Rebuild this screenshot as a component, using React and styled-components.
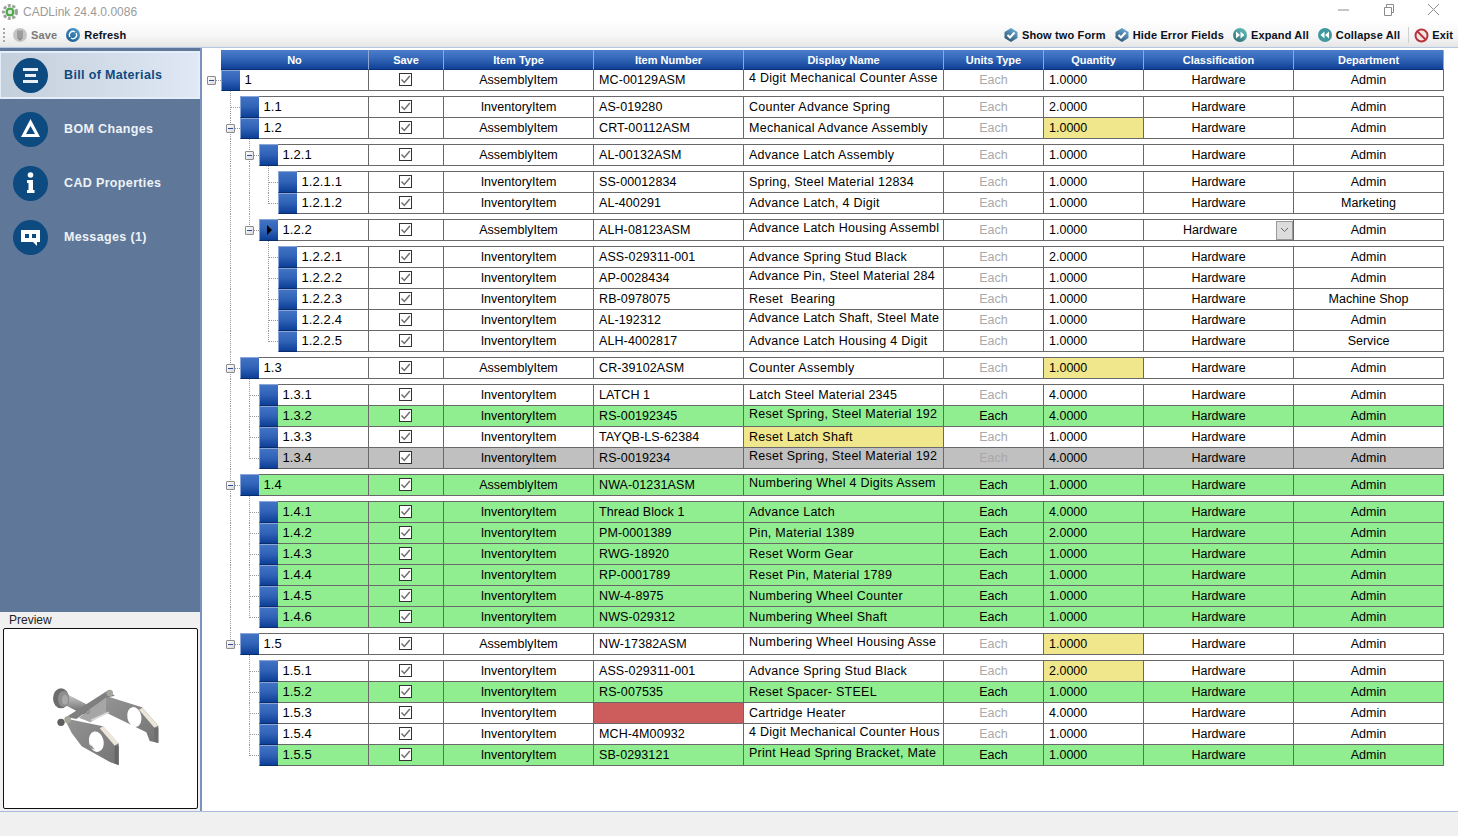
import React from 'react';
import styled, { createGlobalStyle } from 'styled-components';

const GlobalStyle = createGlobalStyle`
  html, body {
    margin: 0;
    padding: 0;
    height: 100%;
    background: #f0f0f0;
    overflow: hidden;
  }
  #root {
    height: 100%;
  }
  * {
    box-sizing: border-box;
  }
`;

const GREEN = '#90ee90';
const GRAY = '#c0c0c0';
const YELLOW = '#f0e68c';
const RED = '#cd5c5c';

// no, type, number, name, qty, opts
const r = (no, type, number, name, qty = '1.0000', opts = {}) => ({ no, type, number, name, qty, ...opts });
const A = 'AssemblyItem';
const I = 'InventoryItem';

const rows = [
  r('1', A, 'MC-00129ASM', '4 Digit Mechanical Counter Asse', '1.0000', { raised: true }),
  r('1.1', I, 'AS-019280', 'Counter Advance Spring', '2.0000'),
  r('1.2', A, 'CRT-00112ASM', 'Mechanical Advance Assembly', '1.0000', { qtyFill: YELLOW }),
  r('1.2.1', A, 'AL-00132ASM', 'Advance Latch Assembly'),
  r('1.2.1.1', I, 'SS-00012834', 'Spring, Steel Material 12834'),
  r('1.2.1.2', I, 'AL-400291', 'Advance Latch, 4 Digit', '1.0000', { dept: 'Marketing' }),
  r('1.2.2', A, 'ALH-08123ASM', 'Advance Latch Housing Assembl', '1.0000', { raised: true, current: true }),
  r('1.2.2.1', I, 'ASS-029311-001', 'Advance Spring Stud Black', '2.0000'),
  r('1.2.2.2', I, 'AP-0028434', 'Advance Pin, Steel Material 284', '1.0000', { raised: true }),
  r('1.2.2.3', I, 'RB-0978075', 'Reset  Bearing', '1.0000', { dept: 'Machine Shop' }),
  r('1.2.2.4', I, 'AL-192312', 'Advance Latch Shaft, Steel Mate', '1.0000', { raised: true }),
  r('1.2.2.5', I, 'ALH-4002817', 'Advance Latch Housing 4 Digit', '1.0000', { dept: 'Service' }),
  r('1.3', A, 'CR-39102ASM', 'Counter Assembly', '1.0000', { qtyFill: YELLOW }),
  r('1.3.1', I, 'LATCH 1', 'Latch Steel Material 2345', '4.0000'),
  r('1.3.2', I, 'RS-00192345', 'Reset Spring, Steel Material 192', '4.0000', { fill: GREEN, raised: true }),
  r('1.3.3', I, 'TAYQB-LS-62384', 'Reset Latch Shaft', '1.0000', { nameFill: YELLOW }),
  r('1.3.4', I, 'RS-0019234', 'Reset Spring, Steel Material 192', '4.0000', { fill: GRAY, raised: true }),
  r('1.4', A, 'NWA-01231ASM', 'Numbering Whel 4 Digits Assem', '1.0000', { fill: GREEN, raised: true }),
  r('1.4.1', I, 'Thread Block 1', 'Advance Latch', '4.0000', { fill: GREEN }),
  r('1.4.2', I, 'PM-0001389', 'Pin, Material 1389', '2.0000', { fill: GREEN }),
  r('1.4.3', I, 'RWG-18920', 'Reset Worm Gear', '1.0000', { fill: GREEN }),
  r('1.4.4', I, 'RP-0001789', 'Reset Pin, Material 1789', '1.0000', { fill: GREEN }),
  r('1.4.5', I, 'NW-4-8975', 'Numbering Wheel Counter', '1.0000', { fill: GREEN }),
  r('1.4.6', I, 'NWS-029312', 'Numbering Wheel Shaft', '1.0000', { fill: GREEN }),
  r('1.5', A, 'NW-17382ASM', 'Numbering Wheel Housing Asse', '1.0000', { qtyFill: YELLOW, raised: true }),
  r('1.5.1', I, 'ASS-029311-001', 'Advance Spring Stud Black', '2.0000', { qtyFill: YELLOW }),
  r('1.5.2', I, 'RS-007535', 'Reset Spacer- STEEL', '1.0000', { fill: GREEN }),
  r('1.5.3', I, '', 'Cartridge Heater', '4.0000', { numberFill: RED }),
  r('1.5.4', I, 'MCH-4M00932', '4 Digit Mechanical Counter Hous', '1.0000', { raised: true }),
  r('1.5.5', I, 'SB-0293121', 'Print Head Spring Bracket, Mate', '1.0000', { fill: GREEN, raised: true }),
];

const levelOf = (row) => row.no.split('.').length - 1;
const parentOf = (no) => no.split('.').slice(0, -1).join('.');

// works out which dotted guide goes in which gutter column
const hasLaterSibling = (index, no) => {
  const parent = parentOf(no);
  const level = no.split('.').length;
  return rows.slice(index + 1).some((x) => x.no.split('.').length === level && parentOf(x.no) === parent);
};

const guidesFor = (row, index) => {
  const level = levelOf(row);
  const parts = row.no.split('.');
  const guides = [];
  for (let col = 0; col <= level; col++) {
    if (col === 0) {
      guides.push(level === 0 ? 'root' : 'none');
    } else if (col === level) {
      guides.push(hasLaterSibling(index, row.no) ? 'tee' : 'last');
    } else {
      const ancestor = parts.slice(0, col + 1).join('.');
      guides.push(hasLaterSibling(index, ancestor) ? 'pass' : 'none');
    }
  }
  return guides;
};

const isParent = (row) => rows.some((x) => parentOf(x.no) === row.no);

const columns = [
  { title: 'Save', width: 75 },
  { title: 'Item Type', width: 150 },
  { title: 'Item Number', width: 150 },
  { title: 'Display Name', width: 200 },
  { title: 'Units Type', width: 100 },
  { title: 'Quantity', width: 100 },
  { title: 'Classification', width: 150 },
  { title: 'Department', width: 150 },
];

const CircleIcon = ({ kind }) => (
  <svg width="35" height="35" viewBox="0 0 35 35">
    <circle cx="17.5" cy="17.5" r="17.5" fill="#0c4a80" />
    {kind === 'list' && (
      <g fill="#e9eff6">
        <rect x="10" y="10" width="15" height="3" />
        <rect x="12" y="16" width="11" height="3" />
        <rect x="10" y="22" width="15" height="3" />
      </g>
    )}
    {kind === 'delta' && <path d="M17.5 7 L8 25 H27 Z M17.5 14 L22 22 H13 Z" fill="#fff" fillRule="evenodd" />}
    {kind === 'info' && (
      <g fill="#fff">
        <circle cx="17.5" cy="9" r="2.8" />
        <path d="M14 14 H20 V24 H21.5 V27 H14 V24 H15.5 V17 H14 Z" />
      </g>
    )}
    {kind === 'chat' && (
      <g>
        <path d="M8 10 H27 V22 H24 V26 L20 22 H8 Z" fill="#fff" />
        <rect x="12" y="14" width="4" height="4" fill="#0c4a80" />
        <rect x="19" y="14" width="4" height="4" fill="#0c4a80" />
      </g>
    )}
  </svg>
);

const BallIcon = ({ kind }) => {
  const fills = {
    check: ['#6cb2dc', '#2c4f6c'],
    refresh: ['#4a9bd0', '#1d5c8e'],
    expand: ['#62c0b8', '#2f6d78'],
  };
  const [a, b] = fills[kind] || fills.check;
  const id = `ball-${kind}`;
  return (
    <svg width="16" height="16" viewBox="0 0 16 16">
      <defs>
        <linearGradient id={id} x1="0.8" y1="0" x2="0.2" y2="1">
          <stop offset="0" stopColor={a} />
          <stop offset="1" stopColor={b} />
        </linearGradient>
      </defs>
      <path d={kind === 'check' ? 'M8 1 L14.5 5 V11 L8 15 L1.5 11 V5 Z' : 'M8 1 A7 7 0 1 0 8 15 A7 7 0 1 0 8 1 Z'} fill={`url(#${id})`} />
      {kind === 'check' && <path d="M4.5 8 L7 10.5 L11.5 5.5" stroke="#fff" strokeWidth="2" fill="none" />}
      {kind === 'expand' && <path d="M4 4.5 L8 8 L4 11.5 Z M8.5 4.5 L12.5 8 L8.5 11.5 Z" fill="#fff" />}
      {kind === 'refresh' && <path d="M5 10 A3.6 3.6 0 0 1 10 5 M11 6 A3.6 3.6 0 0 1 6 11" stroke="#fff" strokeWidth="1.3" fill="none" />}
    </svg>
  );
};

const CollapseIcon = () => (
  <svg width="16" height="16" viewBox="0 0 16 16">
    <circle cx="8" cy="8" r="7" fill="#3e9aa0" />
    <path d="M12 4.5 L8 8 L12 11.5 Z M7.5 4.5 L3.5 8 L7.5 11.5 Z" fill="#fff" />
  </svg>
);

const SaveIcon = () => (
  <svg width="16" height="16" viewBox="0 0 16 16">
    <circle cx="8" cy="8" r="7" fill="#c4c4c4" />
    <rect x="5" y="3.5" width="6" height="8" fill="#9d9d9d" />
    <path d="M8 14 L5.5 11 H10.5 Z" fill="#8a8a8a" />
  </svg>
);

const ExitIcon = () => (
  <svg width="15" height="15" viewBox="0 0 15 15">
    <circle cx="7.5" cy="7.5" r="6" fill="#f2e6e6" stroke="#b8353c" strokeWidth="2" />
    <path d="M3.5 3.5 L11.5 11.5" stroke="#b8353c" strokeWidth="2" />
  </svg>
);

const AppGear = () => (
  <svg width="18" height="18" viewBox="0 0 18 18">
    <circle cx="9" cy="9" r="6.5" fill="none" stroke="#9aa39a" strokeWidth="3" strokeDasharray="3 1.6" />
    <circle cx="9" cy="9" r="4.5" fill="#4fa84a" />
    <circle cx="9" cy="9" r="2.2" fill="#dfe8df" />
  </svg>
);

const CheckMark = () => (
  <svg width="11" height="11" viewBox="0 0 11 11">
    <path d="M1.5 5.5 L4.3 8.4 L9.8 2" stroke="#6e6e6e" strokeWidth="1.5" fill="none" />
  </svg>
);

// traced by eye from the preview thumbnail
const PartDrawing = () => (
  <svg width="115" height="90" viewBox="0 0 345 270">
    <defs>
      <linearGradient id="pin" x1="0" y1="0" x2="0" y2="1">
        <stop offset="0" stopColor="#d0d0d0" />
        <stop offset="1" stopColor="#585858" />
      </linearGradient>
      <linearGradient id="plate" x1="0" y1="0" x2="1" y2="1">
        <stop offset="0" stopColor="#949494" />
        <stop offset="1" stopColor="#747474" />
      </linearGradient>
    </defs>
    <path d="M58 44 L130 82 L120 112 L54 78 Z" fill="url(#pin)" />
    <ellipse cx="42" cy="58" rx="24" ry="30" fill="#6c6c6c" />
    <ellipse cx="50" cy="60" rx="17" ry="24" fill="#8e8e8e" />
    <ellipse cx="54" cy="62" rx="9" ry="15" fill="#a8a8a8" />

    <path d="M175 50 L285 85 L334 140 V192 L308 186 L298 160 L175 100 Z" fill="url(#plate)" />
    <ellipse cx="262" cy="114" rx="21" ry="30" fill="#fff" transform="rotate(-12 262 114)" />
    <path d="M286 86 L334 140 L322 146 L276 92 Z" fill="#ece6d8" />
    <path d="M322 146 H334 V192 L322 188 Z" fill="#6e6e6e" />

    <path d="M176 52 L176 102 L130 130 L96 116 Z" fill="#a6a6a6" />
    <ellipse cx="122" cy="97" rx="5" ry="7" fill="none" stroke="#6b6b6b" strokeWidth="2" />
    <path d="M180 36 L204 50 L176 56 L88 120 L58 114 Z" fill="#7f7f7f" />
    <circle cx="188" cy="42" r="10" fill="#a5a59c" />
    <path d="M132 124 L186 100" stroke="#d8d8d8" strokeWidth="5" />

    <path d="M52 118 L168 142 L215 194 V258 L190 250 L104 202 L74 162 Z" fill="url(#plate)" />
    <ellipse cx="148" cy="188" rx="22" ry="31" fill="#fff" transform="rotate(-12 148 188)" />
    <path d="M130 196 L144 212 L130 206 Z" fill="#8a8a8a" />
    <path d="M168 142 L215 192 L203 200 L158 148 Z" fill="#ece6d8" />
    <path d="M203 200 H215 V258 L203 254 Z" fill="#666" />
    <circle cx="42" cy="130" r="11" fill="#5e5e5e" />
    <circle cx="62" cy="122" r="10" fill="#a6a69c" />
  </svg>
);

const App = () => {
  const sideItems = [
    { label: 'Bill of Materials', icon: 'list', active: true },
    { label: 'BOM Changes', icon: 'delta' },
    { label: 'CAD Properties', icon: 'info' },
    { label: 'Messages (1)', icon: 'chat' },
  ];

  return (
    <Window>
      <GlobalStyle />
      <TitleBar>
        <AppTitle>
          <AppGear />
          <span>CADLink 24.4.0.0086</span>
        </AppTitle>
        <WindowControls>
          <WindowButton>
            <svg width="16" height="16" viewBox="0 0 16 16"><path d="M0 8 H11" stroke="#8c8c8c" /></svg>
          </WindowButton>
          <WindowButton>
            <svg width="16" height="16" viewBox="0 0 16 16"><path d="M1.5 5.5 H8.5 V13.5 H1.5 Z M3.5 5.5 V2.5 H10.5 V10.5 H8.5" fill="none" stroke="#8c8c8c" /></svg>
          </WindowButton>
          <WindowButton>
            <svg width="16" height="16" viewBox="0 0 16 16"><path d="M0 2 L11 13 M11 2 L0 13" stroke="#8c8c8c" /></svg>
          </WindowButton>
        </WindowControls>
      </TitleBar>

      <Toolbar>
        <ToolGroup>
          <Grip />
          <ToolButton $disabled><SaveIcon />Save</ToolButton>
          <ToolButton><BallIcon kind="refresh" />Refresh</ToolButton>
        </ToolGroup>
        <ToolGroup>
          <ToolButton><BallIcon kind="check" />Show two Form</ToolButton>
          <ToolButton><BallIcon kind="check" />Hide Error Fields</ToolButton>
          <ToolButton><BallIcon kind="expand" />Expand All</ToolButton>
          <ToolButton><CollapseIcon />Collapse All</ToolButton>
          <ToolDivider />
          <ToolButton><ExitIcon />Exit</ToolButton>
        </ToolGroup>
      </Toolbar>

      <Body>
        <LeftColumn>
          <SideNav>
            {sideItems.map((item) => (
              <SideItem key={item.label} $active={item.active}>
                <CircleIcon kind={item.icon} />
                <SideLabel $active={item.active}>{item.label}</SideLabel>
              </SideItem>
            ))}
          </SideNav>
          <PreviewGroup>
            <PreviewLabel>Preview</PreviewLabel>
            <PreviewFrame>
              <PartDrawing />
            </PreviewFrame>
          </PreviewGroup>
        </LeftColumn>

        <GridPanel>
          <HeaderRow>
            <HeaderCell $width={148}>No</HeaderCell>
            {columns.map((c) => (
              <HeaderCell key={c.title} $width={c.width}>{c.title}</HeaderCell>
            ))}
          </HeaderRow>

          {rows.map((row, index) => {
            const level = levelOf(row);
            const first = index > 0 && levelOf(rows[index - 1]) !== level;
            const guides = guidesFor(row, index);
            return (
              <Row key={row.no} $first={first}>
                {guides.map((g, col) => (
                  <GuideCol key={col} $kind={g}>
                    {col === level && isParent(row) && <Toggle />}
                  </GuideCol>
                ))}
                <Selector $first={first}>{row.current && <CurrentArrow />}</Selector>
                <Cells $first={first} $fill={row.fill}>
                  <NoCell $width={129 - level * 19}>{row.no}</NoCell>
                  <SaveCell>
                    <CheckBox><CheckMark /></CheckBox>
                  </SaveCell>
                  <Cell $width={150} $center>{row.type}</Cell>
                  <NumberCell $width={150} $fill={row.numberFill}>{row.number}</NumberCell>
                  <NameCell $width={200} $fill={row.nameFill} $raised={row.raised}>{row.name}</NameCell>
                  <Cell $width={100} $center $muted={row.fill !== GREEN}>Each</Cell>
                  <Cell $width={100} $fill={row.qtyFill}>{row.qty}</Cell>
                  {row.current ? (
                    <ComboCell>
                      <ComboText>Hardware</ComboText>
                      <ComboButton>
                        <svg width="9" height="6" viewBox="0 0 9 6"><path d="M1 1 L4.5 4.5 L8 1" stroke="#666" fill="none" /></svg>
                      </ComboButton>
                    </ComboCell>
                  ) : (
                    <Cell $width={150} $center>Hardware</Cell>
                  )}
                  <Cell $width={150} $center>{row.dept || 'Admin'}</Cell>
                </Cells>
              </Row>
            );
          })}
        </GridPanel>
      </Body>
      <StatusBar />
    </Window>
  );
};

export default App;

const Window = styled.div`
  display: flex;
  flex-direction: column;
  height: 836px;
  width: 1458px;
  font-family: "Liberation Sans", Arial, sans-serif;
  background: #f0f0f0;
`;

const TitleBar = styled.div`
  display: flex;
  align-items: center;
  justify-content: space-between;
  height: 23px;
  background: #fff;
  padding: 0 0 0 1px;
`;

const AppTitle = styled.div`
  display: flex;
  align-items: center;
  gap: 4px;
  font-size: 12px;
  color: #9a9a9a;
`;

const WindowControls = styled.div`
  display: flex;
  margin-top: -3px;
`;

const WindowButton = styled.div`
  display: flex;
  align-items: center;
  justify-content: center;
  width: 45px;
  height: 22px;
`;

const Toolbar = styled.div`
  display: flex;
  align-items: center;
  justify-content: space-between;
  height: 25px;
  padding-right: 5px;
  background: linear-gradient(#fdfdfd, #f6f6f6 55%, #e6e6e6);
  border-bottom: 1px solid #b4c6e0;
`;

const ToolGroup = styled.div`
  display: flex;
  align-items: center;
  gap: 8px;
`;

const Grip = styled.div`
  width: 2px;
  height: 15px;
  margin: 0 -1px 0 3px;
  background: repeating-linear-gradient(#a8a8a8 0 2px, transparent 2px 4px);
`;

const ToolButton = styled.div`
  display: flex;
  align-items: center;
  gap: 3px;
  font-size: 11px;
  font-weight: bold;
  letter-spacing: 0.15px;
  color: ${(p) => (p.$disabled ? '#7a7a7a' : '#0a1020')};
`;

const ToolDivider = styled.div`
  width: 1px;
  height: 16px;
  margin: 0 -3px 0 0;
  background: #cfcfcf;
`;

const Body = styled.div`
  display: flex;
  height: 763px;
`;

const LeftColumn = styled.div`
  display: flex;
  flex-direction: column;
  width: 202px;
  border-right: 2px solid #7a93bd;
`;

const SideNav = styled.div`
  display: flex;
  flex-direction: column;
  height: 564px;
  padding-top: 3px;
  background: #5f7899;
`;

const SideItem = styled.div`
  display: flex;
  align-items: center;
  gap: 16px;
  height: ${(p) => (p.$active ? '48px' : '54px')};
  margin-bottom: ${(p) => (p.$active ? '3px' : '0')};
  background: ${(p) => (p.$active ? 'linear-gradient(90deg, #c3cfdb, #dfe8f4)' : 'transparent')};
  border: ${(p) => (p.$active ? '2px solid #e4eefa' : 'none')};
  border-left-width: ${(p) => (p.$active ? '1px' : '0')};
  padding-left: ${(p) => (p.$active ? '12px' : '13px')};
`;

const SideLabel = styled.span`
  font-size: 12.5px;
  font-weight: bold;
  letter-spacing: 0.35px;
  color: ${(p) => (p.$active ? '#104a80' : '#eef2f7')};
`;

const PreviewGroup = styled.div`
  display: flex;
  flex-direction: column;
  height: 199px;
  padding: 0 1px 0 3px;
  background: #f0f0f0;
`;

const PreviewLabel = styled.div`
  height: 16px;
  padding: 2px 0 0 6px;
  font-size: 12px;
  line-height: 13px;
  color: #222;
`;

const PreviewFrame = styled.div`
  display: flex;
  align-items: center;
  justify-content: center;
  width: 195px;
  height: 181px;
  padding: 10px 0 0 8px;
  background: #fff;
  border: 1px solid #111;
  border-radius: 2px;
`;

const GridPanel = styled.div`
  flex: 1;
  padding-top: 2px;
  background: #fff;
`;

const HeaderRow = styled.div`
  display: flex;
  margin-left: 19px;
  height: 20px;
`;

const HeaderCell = styled.div`
  display: flex;
  align-items: center;
  justify-content: center;
  width: ${(p) => p.$width}px;
  padding-top: 1px;
  font-size: 11px;
  font-weight: bold;
  color: #fff;
  background: linear-gradient(#4b7dca, #3467b8 45%, #0f4097);
  border-right: 1px solid #8fa9d6;
  border-bottom: 1px solid #0b2f70;
`;

const Row = styled.div`
  display: flex;
  align-items: flex-end;
  height: ${(p) => (p.$first ? '27px' : '21px')};
`;

const GuideCol = styled.div`
  position: relative;
  align-self: stretch;
  width: 19px;
  flex: none;

  &::before {
    content: '';
    position: absolute;
    left: 9px;
    top: 0;
    bottom: ${(p) => (p.$kind === 'last' ? '10px' : '0')};
    border-left: 1px dotted #999;
    display: ${(p) => (p.$kind === 'tee' || p.$kind === 'last' || p.$kind === 'pass' ? 'block' : 'none')};
  }

  &::after {
    content: '';
    position: absolute;
    left: 9px;
    right: 0;
    bottom: 10px;
    border-top: 1px dotted #999;
    display: ${(p) => (p.$kind === 'none' || p.$kind === 'pass' ? 'none' : 'block')};
  }
`;

const Toggle = styled.div`
  position: absolute;
  z-index: 1;
  left: 5px;
  bottom: 6px;
  width: 9px;
  height: 9px;
  background: linear-gradient(135deg, #fff, #d8d8d8);
  border: 1px solid #8c8c8c;
  border-radius: 1px;

  &::after {
    content: '';
    position: absolute;
    left: 1px;
    right: 1px;
    top: 3px;
    height: 1px;
    background: #2b4ea0;
  }
`;

const Selector = styled.div`
  display: flex;
  align-items: center;
  justify-content: center;
  flex: none;
  width: 19px;
  height: ${(p) => (p.$first ? '22px' : '21px')};
  background: linear-gradient(#4273c4, #2f62b6 50%, #0c3f96);
  border-top: 1px solid #8aa6d8;
  border-left: 1px solid #8aa6d8;
  border-bottom: 1px solid #0a2c6b;
`;

const CurrentArrow = styled.div`
  width: 0;
  height: 0;
  border-left: 5px solid #000;
  border-top: 5px solid transparent;
  border-bottom: 5px solid transparent;
`;

const Cells = styled.div`
  display: flex;
  height: ${(p) => (p.$first ? '22px' : '21px')};
  border-top: ${(p) => (p.$first ? '1px solid #696969' : 'none')};
  border-bottom: 1px solid #696969;
  background: ${(p) => p.$fill || '#fff'};
`;

const Cell = styled.div`
  flex: none;
  width: ${(p) => p.$width}px;
  padding: ${(p) => (p.$raised ? '0' : '2px')} 0 0 ${(p) => (p.$center ? '0' : '5px')};
  border-right: 1px solid #696969;
  font-size: 12.5px;
  line-height: 16px;
  text-align: ${(p) => (p.$center ? 'center' : 'left')};
  color: ${(p) => (p.$muted ? '#a9a9a9' : '#000')};
  background: ${(p) => p.$fill || 'transparent'};
  white-space: pre;
  overflow: hidden;
`;

const NoCell = styled(Cell)`
  padding-left: 4.5px;
  font-size: 13px;
  letter-spacing: 0.1px;
`;

const NumberCell = styled(Cell)`
  letter-spacing: 0.1px;
`;

const NameCell = styled(Cell)`
  letter-spacing: 0.26px;
`;

const SaveCell = styled.div`
  display: flex;
  align-items: center;
  justify-content: center;
  flex: none;
  width: 75px;
  padding: 0 1px 1px 0;
  border-right: 1px solid #696969;
`;

const CheckBox = styled.div`
  display: flex;
  align-items: center;
  justify-content: center;
  width: 13px;
  height: 13px;
  background: #fff;
  border: 1px solid #333;
`;

const ComboCell = styled.div`
  display: flex;
  align-items: center;
  flex: none;
  width: 150px;
  border-right: 1px solid #696969;
`;

const ComboText = styled.div`
  flex: 1;
  padding: 0 0 0 39px;
  font-size: 12.5px;
`;

const ComboButton = styled.div`
  display: flex;
  align-items: center;
  justify-content: center;
  width: 17px;
  height: 19px;
  background: #dcdcdc;
  border: 1px solid #9a9a9a;
`;

const StatusBar = styled.div`
  flex: 1;
  background: #f0f0f0;
  border-top: 1px solid #a9bcdc;
`;
